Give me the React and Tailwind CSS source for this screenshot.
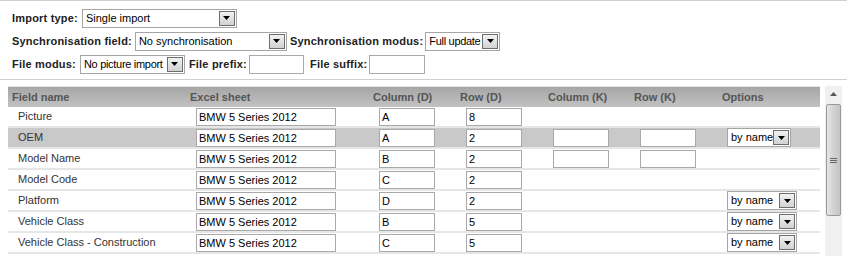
import React from 'react'

const rows = [
  { name: 'Picture', sheet: 'BMW 5 Series 2012', col: 'A', row: '8' },
  { name: 'OEM', sheet: 'BMW 5 Series 2012', col: 'A', row: '2', k: true, opt: 'narrow', active: true },
  { name: 'Model Name', sheet: 'BMW 5 Series 2012', col: 'B', row: '2', k: true },
  { name: 'Model Code', sheet: 'BMW 5 Series 2012', col: 'C', row: '2' },
  { name: 'Platform', sheet: 'BMW 5 Series 2012', col: 'D', row: '2', opt: 'wide' },
  { name: 'Vehicle Class', sheet: 'BMW 5 Series 2012', col: 'B', row: '5', opt: 'wide' },
  { name: 'Vehicle Class - Construction', sheet: 'BMW 5 Series 2012', col: 'C', row: '5', opt: 'wide' },
]

const Arrow = () => (
  <div className="absolute right-px top-px bottom-px w-[16px] flex items-center justify-center bg-gradient-to-b from-[#f2f2f2] to-[#d2d2d2] border border-[#6d6d6d]">
    <svg width="7" height="4" viewBox="0 0 7 4">
      <path d="M0 0h7L3.5 4z" fill="#000" />
    </svg>
  </div>
)

const Select = ({ value, className, textClass = '' }) => (
  <div className={`relative h-[19px] bg-white border border-[#a5a5a5] ${className}`}>
    <span className={`block whitespace-nowrap text-[11px] leading-[17px] pl-[3px] text-black ${textClass}`}>{value}</span>
    <Arrow />
  </div>
)

const Input = ({ value, className }) => (
  <div className={`h-[18px] bg-white border border-[#a9a9a9] text-[11px] leading-[16px] pl-[2px] text-black whitespace-nowrap ${className}`}>
    {value}
  </div>
)

const Label = ({ children, className = '' }) => (
  <span className={`text-[11px] font-bold tracking-[0.2px] text-[#222] ${className}`}>{children}</span>
)

export default function App() {
  return (
    <div className="w-[847px] h-[256px] overflow-hidden bg-white border-t border-[#d0d0d0] font-['Liberation_Sans',Arial,sans-serif]">
      <div className="pl-[12px] pt-[7px] pb-[5px] border-b border-[#d0d0d0] flex flex-col gap-[3px]">
        <div className="flex items-center h-[20px]">
          <Label className="mr-[4px]">Import type:</Label>
          <Select value="Single import" className="w-[155px]" />
        </div>
        <div className="flex items-center h-[20px]">
          <Label className="mr-[3px]">Synchronisation field:</Label>
          <Select value="No synchronisation" className="w-[152px]" />
          <Label className="ml-[3px] mr-[2px]">Synchronisation modus:</Label>
          <Select value="Full update" className="w-[75px]" textClass="tracking-[-0.3px] pl-[2px]" />
        </div>
        <div className="flex items-center h-[20px]">
          <Label className="mr-[4px]">File modus:</Label>
          <Select value="No picture import" className="w-[105px]" textClass="tracking-[-0.3px] pl-[2px]" />
          <Label className="ml-[4px] mr-[2px]">File prefix:</Label>
          <Input value="" className="w-[55px] h-[19px]" />
          <Label className="ml-[6px] mr-[2px]">File suffix:</Label>
          <Input value="" className="w-[56px] h-[19px]" />
        </div>
      </div>

      <div className="flex mt-[6px]">
        <div className="ml-[8px] w-[812px]">
          <div className="h-[21px] flex items-center text-[11px] font-bold text-[#555] bg-gradient-to-b from-[#a6a6a6] to-[#c2c2c2] border-t border-[#e4e4e4]">
            <span className="w-[182px] pl-[4px]">Field name</span>
            <span className="w-[183px]">Excel sheet</span>
            <span className="w-[87px]">Column (D)</span>
            <span className="w-[88px]">Row (D)</span>
            <span className="w-[86px]">Column (K)</span>
            <span className="w-[88px]">Row (K)</span>
            <span>Options</span>
          </div>
          {rows.map((r) => (
            <div
              key={r.name}
              className={`h-[21px] flex items-center text-[11px] text-[#333] border-b-2 border-[#e6e6e6] ${r.active ? 'bg-[#c9c9c9]' : 'bg-white'}`}
            >
              <span className="w-[188px] pl-[10px]">{r.name}</span>
              <Input value={r.sheet} className="w-[140px]" />
              <div className="w-[43px]" />
              <Input value={r.col} className="w-[56px]" />
              <div className="w-[31px]" />
              <Input value={r.row} className="w-[56px]" />
              <div className="w-[31px]" />
              {r.k ? (
                <>
                  <Input value="" className="w-[56px]" />
                  <div className="w-[31px]" />
                  <Input value="" className="w-[56px]" />
                  <div className="w-[31px]" />
                </>
              ) : (
                <div className="w-[174px]" />
              )}
              {r.opt === 'narrow' && <Select value="by name" className="w-[64px]" />}
              {r.opt === 'wide' && <Select value="by name" className="w-[70px]" />}
            </div>
          ))}
        </div>
        <div className="ml-[5px] w-[17px] h-[170px] bg-[#f0f0f0] flex flex-col">
          <div className="h-[16px] flex items-center justify-center">
            <svg width="7" height="4" viewBox="0 0 7 4">
              <path d="M3.5 0L7 4H0z" fill="#555" />
            </svg>
          </div>
          <div className="mx-px mt-[2px] h-[112px] border border-[#9a9a9a] rounded-[2px] bg-gradient-to-r from-[#e6e6e6] via-[#d2d2d2] to-[#c4c4c4] flex flex-col items-center justify-center gap-[1px]">
            <div className="w-[7px] h-px bg-[#666]" />
            <div className="w-[7px] h-px bg-[#666]" />
            <div className="w-[7px] h-px bg-[#666]" />
          </div>
        </div>
      </div>
    </div>
  )
}
